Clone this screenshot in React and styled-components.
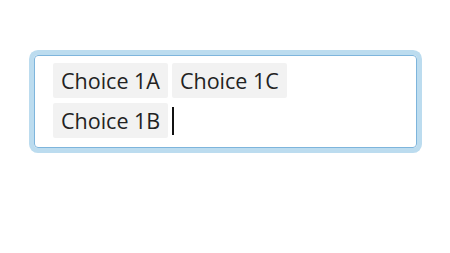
import React from 'react';
import styled, { createGlobalStyle } from 'styled-components';

const GlobalStyle = createGlobalStyle`
  html, body {
    margin: 0;
    padding: 0;
    background: #fff;
    font-family: "Open Sans", "Liberation Sans", sans-serif;
  }
`;

const Page = styled.div`
  box-sizing: border-box;
  min-height: 100vh;
  padding: 55px 33px 0 34px;
`;

const Field = styled.div`
  box-sizing: border-box;
  height: 93px;
  border: 1px solid #7eb5dc;
  border-radius: 4px;
  box-shadow: 0 0 0 5px #bcdcef;
  padding: 7px 18px;
  display: flex;
  flex-direction: column;
  gap: 5px;
`;

const Row = styled.div`
  display: flex;
  gap: 4px;
  align-items: center;
`;

const Chip = styled.span`
  box-sizing: border-box;
  height: 35px;
  padding: 0 8px;
  display: flex;
  align-items: center;
  background: #f2f2f2;
  border-radius: 2px;
  color: #222;
  font-size: 21.5px;
  white-space: nowrap;
`;

const Caret = styled.span`
  width: 2px;
  height: 28px;
  margin-left: 0;
  background: #111;
`;

const rows = [['Choice 1A', 'Choice 1C'], ['Choice 1B']];

const App = () => {
  return (
    <>
      <GlobalStyle />
      <Page>
        <Field>
          {rows.map((row, i) => (
            <Row key={i}>
              {row.map((c) => (
                <Chip key={c}>{c}</Chip>
              ))}
              {i === rows.length - 1 && <Caret />}
            </Row>
          ))}
        </Field>
      </Page>
    </>
  );
};

export default App;
